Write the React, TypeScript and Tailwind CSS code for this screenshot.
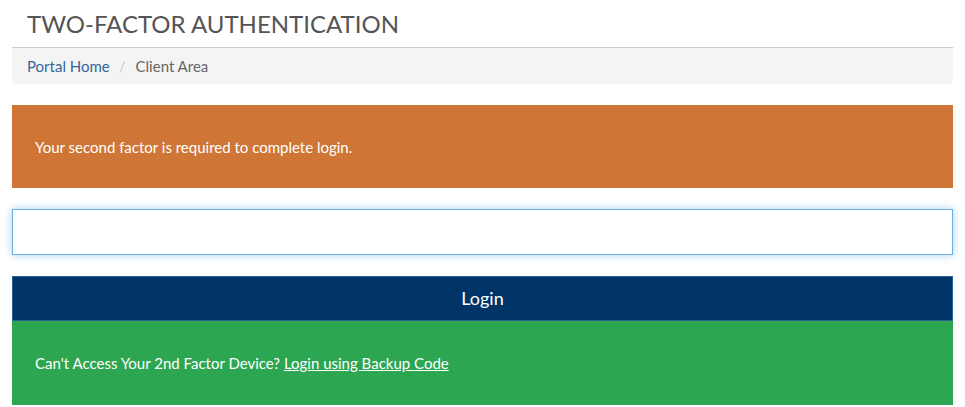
export default function App() {
  return (
    <div className="w-[965px] h-[407px] bg-white font-['Lato','Liberation_Sans',sans-serif] overflow-hidden">
      <div className="mx-3">
        <div className="h-[48px] border-b border-[#cccccc] flex items-end px-[15px] pb-[9px]">
          <h1 className="text-[24px] leading-[28px] text-[#555555] uppercase">Two-Factor Authentication</h1>
        </div>
        <div className="h-[36px] bg-[#f4f4f4] rounded-b-[4px] flex items-center px-[15px] text-[15px] text-[#666666]">
          <a href="#" className="text-[#336699]">Portal Home</a>
          <span className="pl-[9px] pr-[10px] text-[#cccccc]">/</span>
          <span>Client Area</span>
        </div>

        <div className="mt-[21px] h-[83px] bg-[#cf7536] text-white text-[15px] flex items-center px-[23px] pt-[2px]">
          Your second factor is required to complete login.
        </div>

        <input
          type="text"
          className="mt-[21px] block w-full h-[46px] border border-[#66afe9] bg-white outline-none shadow-[0_0_8px_rgba(102,175,233,0.6)]"
        />

        <button
          type="button"
          className="mt-[21px] block w-full h-[45px] bg-[#003366] border border-[#2a6496] text-white text-[18px]"
        >
          Login
        </button>
        <div className="h-[84px] bg-[#2ca651] text-white text-[15px] flex items-center px-[23px]">
          <span>
            Can&apos;t Access Your 2nd Factor Device?{' '}
            <a href="#" className="underline">Login using Backup Code</a>
          </span>
        </div>
      </div>
    </div>
  )
}
